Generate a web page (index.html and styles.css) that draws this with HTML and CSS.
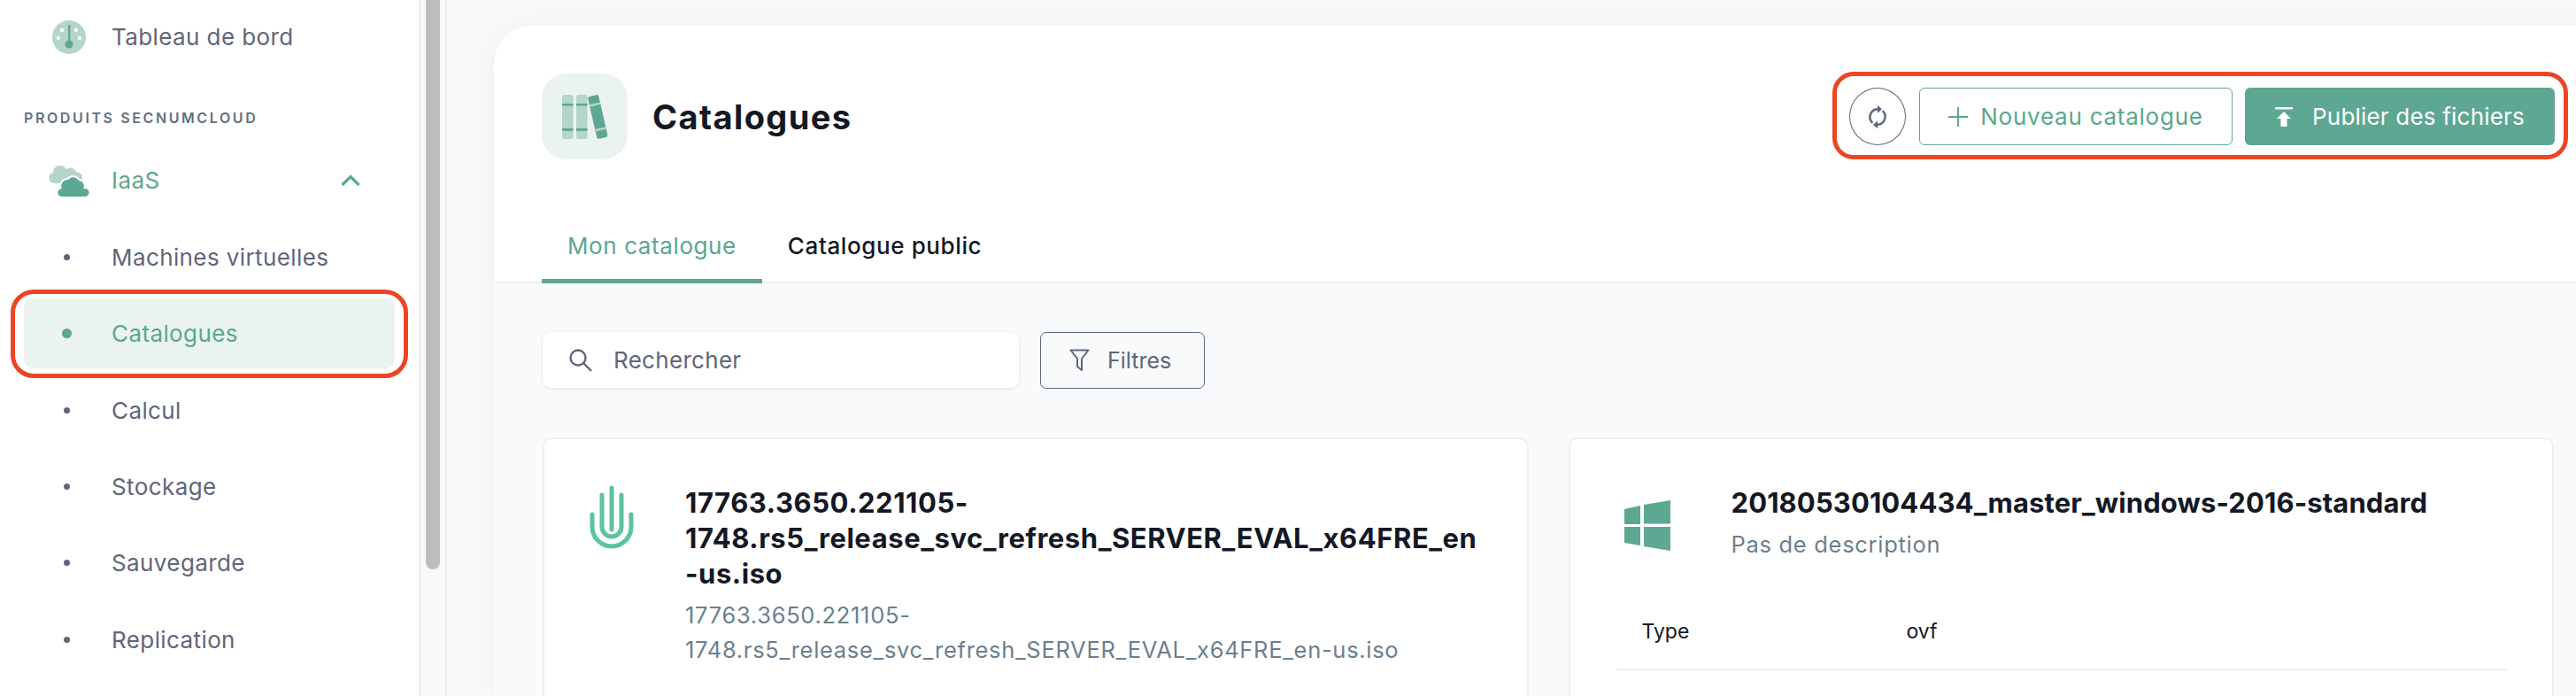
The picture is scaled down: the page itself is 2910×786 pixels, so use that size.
FILE: index.html
```html
<!DOCTYPE html>
<html lang="fr">
<head>
  <meta charset="UTF-8">
  <title>Catalogues</title>
  <link rel="stylesheet" href="styles.css">
</head>
<body>
<aside class="sidebar">
  <nav class="nav">
    <a class="nav-item">
      <span class="nav-slot">
        <svg width="38" height="38" viewBox="0 0 38 38">
          <circle cx="19" cy="19" r="19" fill="#b5d5ca"/>
          <circle cx="7" cy="20" r="2.2" fill="#fff"/>
          <circle cx="11" cy="11" r="2.2" fill="#fff"/>
          <circle cx="27" cy="11" r="2.2" fill="#fff"/>
          <circle cx="31" cy="20" r="2.2" fill="#fff"/>
          <rect x="18" y="5" width="2.4" height="20" fill="#5ea792"/>
          <circle cx="19" cy="27" r="4.6" fill="#5ea792"/>
        </svg>
      </span>
      Tableau de bord
    </a>
    <div class="nav-section">PRODUITS SECNUMCLOUD</div>
    <a class="nav-item nav-item-open">
      <span class="nav-slot">
        <svg width="47" height="38" viewBox="0 0 47 38">
          <path d="M6 22a6 6 0 0 1-1-11.800a8 8 0 0 1 15-4a7 7 0 0 1 11 3a6 6 0 0 1 1 12.800z" fill="#b5d5ca"/>
          <path d="M15 38a5.500 5.500 0 0 1-1.500-10.800a8 8 0 0 1 8-10.200a8 8 0 0 1 13 1a7 7 0 0 1 6 9a5.500 5.500 0 0 1 1 11z" fill="#5ea792" stroke="#fff" stroke-width="2"/>
        </svg>
      </span>
      IaaS
      <svg class="nav-chevron" width="22" height="14" viewBox="0 0 22 14">
        <path d="M1.500 12L11 2.500l9.500 9.500" fill="none" stroke="#5aa78f" stroke-width="3.200"/>
      </svg>
    </a>
    <a class="nav-item"><span class="nav-slot"><i class="dot"></i></span>Machines virtuelles</a>
    <a class="nav-item nav-item-active"><span class="nav-slot"><i class="dot"></i></span>Catalogues</a>
    <a class="nav-item"><span class="nav-slot"><i class="dot"></i></span>Calcul</a>
    <a class="nav-item"><span class="nav-slot"><i class="dot"></i></span>Stockage</a>
    <a class="nav-item"><span class="nav-slot"><i class="dot"></i></span>Sauvegarde</a>
    <a class="nav-item"><span class="nav-slot"><i class="dot"></i></span>Replication</a>
  </nav>
</aside>
<div class="scrollbar"><div class="scrollbar-thumb"></div></div>

<main class="main">
  <section class="panel">
    <header class="panel-header">
      <div class="panel-top">
        <div class="panel-icon">
          <svg width="52" height="50" viewBox="0 0 52 50">
            <rect x="0" y="0" width="12.500" height="50" rx="2.500" fill="#b5d5ca"/>
            <rect x="16" y="0" width="12.500" height="50" rx="2.500" fill="#b5d5ca"/>
            <rect x="0" y="10" width="12.500" height="2.500" fill="#5ea792"/>
            <rect x="16" y="10" width="12.500" height="2.500" fill="#5ea792"/>
            <rect x="0" y="38" width="12.500" height="2.800" fill="#5ea792"/>
            <rect x="16" y="38" width="12.500" height="2.800" fill="#5ea792"/>
            <g transform="rotate(-13 40 25)">
              <rect x="34" y="0.500" width="12.500" height="49" rx="2.500" fill="#5ea792"/>
              <rect x="34" y="9.500" width="12.500" height="2.500" fill="#b5d5ca"/>
              <rect x="34" y="38" width="12.500" height="2.500" fill="#b5d5ca"/>
            </g>
          </svg>
        </div>
        <h1 class="panel-title">Catalogues</h1>
        <div class="actions">
          <button class="btn-round">
            <svg width="30" height="30" viewBox="0 0 24 24">
              <path d="M7.500 17.500A7.200 7.200 0 0 1 12 5" fill="none" stroke="#5f6679" stroke-width="2"/>
              <path d="M12 1.500v7L16 5z" fill="#5f6679"/>
              <path d="M16.500 6.500A7.200 7.200 0 0 1 12 19" fill="none" stroke="#5f6679" stroke-width="2"/>
              <path d="M12 15.500v7L8 19z" fill="#5f6679"/>
            </svg>
          </button>
          <button class="btn btn-outline">
            <svg width="22" height="22" viewBox="0 0 22 22"><path d="M11 0v22M0 11h22" stroke="#5aa78f" stroke-width="2" fill="none"/></svg>
            Nouveau catalogue
          </button>
          <button class="btn btn-solid">
            <svg width="20" height="22" viewBox="0 0 20 22"><path d="M0 0h20v2.500H0zM10 5l8 8h-4.500v9h-7v-9H2z" fill="#fff"/></svg>
            Publier des fichiers
          </button>
        </div>
      </div>
      <div class="tabs">
        <a class="tab tab-active">Mon catalogue</a>
        <a class="tab">Catalogue public</a>
      </div>
    </header>

    <div class="panel-body">
      <div class="toolbar">
        <div class="search">
          <svg width="27" height="27" viewBox="0 0 27 27">
            <circle cx="11" cy="11" r="8.500" fill="none" stroke="#5f6679" stroke-width="2.400"/>
            <path d="M17.500 17.500L26 26" stroke="#5f6679" stroke-width="2.400" fill="none"/>
          </svg>
          Rechercher
        </div>
        <button class="btn-filter">
          <svg width="23" height="26" viewBox="0 0 23 26">
            <path d="M1.500 1.500h20L14 11v13l-5-4v-9z" fill="none" stroke="#5f6679" stroke-width="2" stroke-linejoin="round"/>
          </svg>
          Filtres
        </button>
      </div>

      <div class="grid">
        <article class="item item-iso">
          <div class="item-head">
            <svg class="item-icon" width="50" height="72" viewBox="0 0 50 72">
              <g fill="none" stroke="#5cc29f" stroke-width="5" stroke-linecap="round">
                <path d="M3 33v14a22 22 0 0 0 44 0V33"/>
                <path d="M14 11v36a11 11 0 0 0 22 0V11"/>
                <path d="M25 3v47"/>
              </g>
            </svg>
            <div>
              <h2 class="item-title">17763.3650.221105-<br>1748.rs5_release_svc_refresh_SERVER_EVAL_x64FRE_en<br>-us.iso</h2>
              <p class="item-desc">17763.3650.221105-<br>1748.rs5_release_svc_refresh_SERVER_EVAL_x64FRE_en-us.iso</p>
            </div>
          </div>
        </article>
        <article class="item item-win">
          <div class="item-head">
            <svg class="item-icon" width="52" height="57" viewBox="0 0 52 57">
              <path d="M0 10L18 6v21H0zM22 5L52 0v26.500H22zM0 30h18v21L0 48zM22 30h30v27l-30-5z" fill="#5ea792"/>
            </svg>
            <div>
              <h2 class="item-title">20180530104434_master_windows-2016-standard</h2>
              <p class="item-desc">Pas de description</p>
            </div>
          </div>
          <div class="item-row"><span class="item-key">Type</span><span>ovf</span></div>
        </article>
      </div>
    </div>
  </section>
</main>
</body>
</html>
```

FILE: styles.css
```css
* {
  box-sizing: border-box;
}
body {
  margin: 0;
  height: 786px;
  overflow: hidden;
  display: flex;
  font-family: "Inter", "Open Sans", sans-serif;
  color: #141824;
  background: #f9fafc;
}
button {
  font-family: inherit;
  cursor: pointer;
}

/* sidebar */
.sidebar {
  width: 473px;
  flex: none;
  background: #fff;
  padding: 2px 27px 0;
}
.nav {
  display: flex;
  flex-direction: column;
}
.nav-item {
  position: relative;
  display: flex;
  align-items: center;
  height: 79px;
  margin-bottom: 7.4px;
  padding-left: 25px;
  border-radius: 10px;
  font-size: 26px;
  letter-spacing: 0.4px;
  color: #5f6679;
}
.nav-slot {
  width: 52px;
  margin-right: 22px;
  display: flex;
  justify-content: center;
  align-items: center;
}
.nav-section {
  font-size: 16px;
  font-weight: 600;
  letter-spacing: 2.600px;
  line-height: 20px;
  height: 20px;
  margin: 35px 0 21px;
  color: #5f7080;
}
.nav-item-open {
  color: #5aa78f;
}
.nav-chevron {
  margin-left: auto;
  margin-right: 39px;
}
.dot {
  width: 7px;
  height: 7px;
  margin-right: 5px;
  border-radius: 50%;
  background: #5f6679;
}
.nav-item-active {
  background: #ebf3f0;
  color: #5aa78f;
}
.nav-item-active .dot {
  width: 11px;
  height: 11px;
  background: #5ea792;
}
.nav-item-active::after {
  content: "";
  position: absolute;
  top: -10px;
  right: -15px;
  bottom: -11px;
  left: -15px;
  border: 5px solid #ed4524;
  border-radius: 26px;
}

/* fake scrollbar */
.scrollbar {
  width: 32px;
  flex: none;
  padding-left: 8px;
  background: #f8f8f8;
  border-left: 2px solid #ececec;
  border-right: 2px solid #ececec;
}
.scrollbar-thumb {
  width: 16px;
  height: 643px;
  margin-left: -2px;
  background: #bdbdbd;
  border-radius: 0 0 8px 8px;
}

/* main panel */
.main {
  flex: 1;
  min-width: 0;
  overflow: hidden;
  padding: 29px 0 0 53px;
}
.panel {
  width: 2412px;
  height: 757px;
  overflow: hidden;
  background: #f9fafc;
  border-radius: 42px 42px 0 0;
  box-shadow: 0 0 44px rgba(20, 24, 36, 0.05);
}
.panel-header {
  height: 291px;
  padding: 54px 84px 0 54px;
  background: #fff;
  border-radius: 42px 42px 0 0;
  border-bottom: 2px solid #eee;
}
.panel-top {
  display: flex;
  align-items: center;
  height: 97px;
}
.panel-icon {
  width: 97px;
  height: 97px;
  display: flex;
  justify-content: center;
  align-items: center;
  background: #ebf3f0;
  border-radius: 28px;
}
.panel-title {
  margin: 0 0 0 28px;
  font-size: 38px;
  letter-spacing: 1.4px;
  font-weight: 700;
}
.actions {
  position: relative;
  margin-left: auto;
  display: flex;
  align-items: center;
  gap: 15px;
}
.actions::after {
  content: "";
  position: absolute;
  top: -18px;
  right: -15px;
  bottom: -16px;
  left: -19px;
  border: 5px solid #ed4524;
  border-radius: 24px;
}
.btn-round {
  width: 64px;
  height: 65px;
  padding: 0;
  display: flex;
  justify-content: center;
  align-items: center;
  background: #fff;
  border: 1.500px solid #5f6679;
  border-radius: 50%;
}
.btn {
  height: 65px;
  display: flex;
  align-items: center;
  justify-content: center;
  border-radius: 6px;
  font-size: 26px;
}
.btn-outline {
  width: 354px;
  gap: 14px;
  color: #5aa78f;
  letter-spacing: 0.75px;
  background: #fff;
  border: 1.500px solid #5ea792;
}
.btn-solid {
  width: 350px;
  margin-left: -1px;
  gap: 22px;
  color: #fff;
  letter-spacing: 0.2px;
  background: #5ea792;
  border: 0;
}
.tabs {
  display: flex;
  height: 80px;
  margin-top: 60px;
}
.tab {
  height: 80px;
  padding: 0 29px;
  display: flex;
  align-items: center;
  font-size: 26px;
  letter-spacing: 0.6px;
  font-weight: 500;
  border-bottom: 5px solid transparent;
}
.tab-active {
  color: #5aa78f;
  font-weight: 400;
  border-bottom-color: #5ea792;
}

.panel-body {
  padding: 55px 85px 0 55px;
}
.toolbar {
  display: flex;
  gap: 24px;
  margin-bottom: 55px;
}
.search {
  width: 538px;
  height: 63px;
  padding-left: 29px;
  display: flex;
  align-items: center;
  gap: 24px;
  background: #fff;
  border-radius: 10px;
  box-shadow: 0 1px 4px rgba(20, 24, 36, 0.1);
  font-size: 26px;
  letter-spacing: 0.3px;
  color: #5f6679;
}
.btn-filter {
  width: 186px;
  height: 64px;
  padding: 0 0 0 32px;
  display: flex;
  align-items: center;
  gap: 20px;
  background: transparent;
  border: 1.500px solid #5f6679;
  border-radius: 7px;
  font-size: 25px;
  color: #5f6679;
}
.grid {
  display: grid;
  grid-template-columns: 1fr 1fr;
  gap: 45px;
}
.item {
  height: 292px;
  padding-top: 52px;
  background: #fff;
  border: 2px solid #eceef1;
  border-bottom: 0;
  border-radius: 10px 10px 0 0;
}
.item-head {
  display: flex;
  align-items: flex-start;
}
.item-iso .item-head {
  padding-left: 51px;
}
.item-iso .item-icon {
  margin-right: 58px;
  flex: none;
}
.item-win .item-head {
  padding-left: 61px;
}
.item-win .item-icon {
  margin: 17px 69px 0 0;
  flex: none;
}
.item-title {
  margin: 0;
  font-size: 31px;
  line-height: 40px;
  font-weight: 700;
  white-space: nowrap;
}
.item-iso .item-title {
  letter-spacing: 0.55px;
}
.item-win .item-title {
  letter-spacing: 0.1px;
}
.item-desc {
  margin: 7px 0 0;
  font-size: 25.500px;
  letter-spacing: 0.7px;
  line-height: 39px;
  color: #6b7f8e;
  white-space: nowrap;
}
.item-row {
  display: flex;
  align-items: center;
  height: 86px;
  margin: 37px 51px 0 53px;
  padding-left: 28px;
  border-bottom: 2px solid #eceef1;
  font-size: 23px;
}
.item-key {
  width: 299px;
}
```
